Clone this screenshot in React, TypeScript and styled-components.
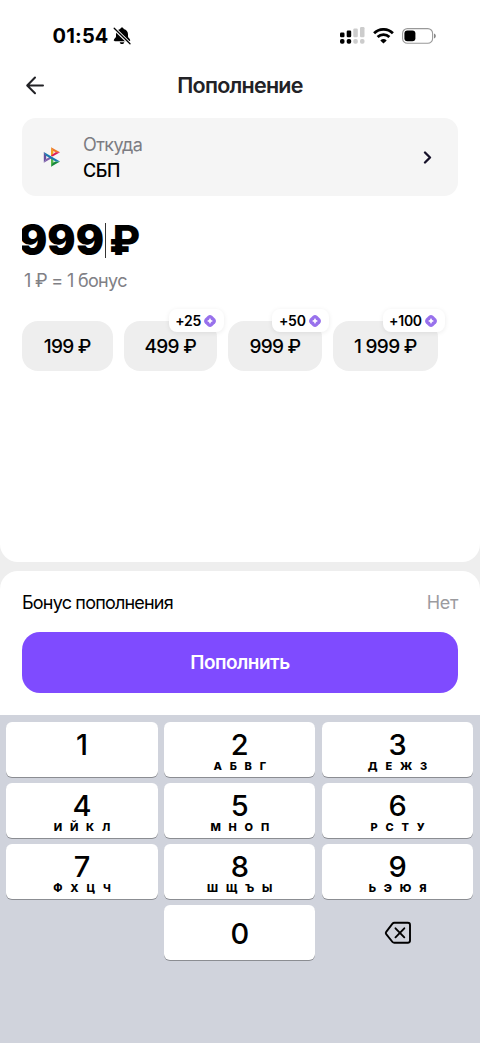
import React from 'react';
import styled, { createGlobalStyle } from 'styled-components';

const Global = createGlobalStyle`
  * { box-sizing: border-box; }
  body { margin: 0; background: #eeeeee; }
  button { border: 0; padding: 0; font: inherit; color: inherit; background: none; }
  svg { display: block; flex: none; }
`;

const Screen = styled.div`
  width: 480px;
  height: 1043px;
  overflow: hidden;
  display: flex;
  flex-direction: column;
  background: #eeeeee;
  color: #000;
  font-family: Inter, 'Liberation Sans', sans-serif;
`;

const TopSheet = styled.main`
  height: 562px;
  flex: none;
  background: #fff;
  border-radius: 0 0 18px 18px;
`;

const StatusBar = styled.div`
  height: 56px;
  padding: 15px 44px 0 52.5px;
  display: flex;
  align-items: center;
  justify-content: space-between;
`;

const StatusGroup = styled.div<{ $gap: number }>`
  display: flex;
  align-items: center;
  gap: ${p => p.$gap}px;
`;

const Clock = styled.span`
  font-size: 20px;
  line-height: 24px;
  font-weight: 700;
  letter-spacing: 0.2px;
`;

const Header = styled.header`
  height: 62px;
  padding: 0 22px 5px;
  display: grid;
  grid-template-columns: 26px 1fr 26px;
  align-items: center;
`;

const Title = styled.h1`
  margin: 0;
  text-align: center;
  font-size: 21.5px;
  line-height: 28px;
  font-weight: 600;
  letter-spacing: -0.75px;
  color: #222226;
`;

const SourceCard = styled.button`
  width: 436px;
  height: 78px;
  margin: 0 22px;
  padding: 0 25px 0 21px;
  display: flex;
  align-items: center;
  border-radius: 14px;
  background: #f5f5f5;
  text-align: left;
`;

const SourceText = styled.div`
  flex: 1;
  margin-left: 22px;
  padding-top: 2px;
  display: flex;
  flex-direction: column;
`;

const Caption = styled.span`
  font-size: 18px;
  line-height: 26px;
  letter-spacing: -0.6px;
  color: #7c7c82;
`;

const SourceName = styled.span`
  font-size: 18px;
  line-height: 26px;
  font-weight: 500;
  letter-spacing: -0.4px;
`;

const Amount = styled.div`
  height: 52px;
  margin: 18px 22px 0;
  display: flex;
  align-items: center;
  font-size: 42px;
  line-height: 52px;
  font-weight: 900;
`;

const AmountInput = styled.div`
  width: 82px;
  overflow: hidden;
  display: flex;
  justify-content: flex-end;
`;

const Caret = styled.i`
  width: 1.5px;
  height: 35px;
  margin: 0 3px 0 0.5px;
  background: #333;
`;

const Currency = styled.span`
  font-size: 41px;
  font-weight: 800;
`;

const Rate = styled.div`
  margin: 2px 24px 0;
  font-size: 18px;
  line-height: 26px;
  letter-spacing: -0.68px;
  color: #808085;
`;

const Presets = styled.div`
  margin: 27px 22px 0;
  display: flex;
  gap: 11.2px;
`;

const Preset = styled.button<{ $width: number }>`
  position: relative;
  width: ${p => p.$width}px;
  height: 50px;
  border-radius: 16px;
  background: #eeeeee;
  font-size: 19px;
  font-weight: 500;
  letter-spacing: -0.7px;
  text-align: center;
`;

const BonusBadge = styled.span`
  position: absolute;
  right: -7px;
  top: -12px;
  height: 23px;
  padding: 0 7.5px 0 6.5px;
  display: flex;
  align-items: center;
  gap: 3.5px;
  border-radius: 8px;
  background: #fff;
  box-shadow: 0 1px 5px rgba(0, 0, 0, 0.08);
  font-size: 14px;
  font-weight: 600;
  letter-spacing: -0.25px;
`;

const BottomSheet = styled.section`
  height: 144px;
  flex: none;
  margin-top: 9px;
  padding: 18px 22px 0;
  background: #fff;
  border-radius: 18px 18px 0 0;
`;

const BonusRow = styled.div`
  height: 26px;
  margin-bottom: 17px;
  display: flex;
  align-items: center;
  justify-content: space-between;
  font-size: 18px;
  letter-spacing: -0.8px;
`;

const Muted = styled.span`
  color: #9b9b9f;
  letter-spacing: -0.3px;
`;

const Submit = styled.button`
  width: 100%;
  height: 61px;
  border-radius: 18px;
  background: #7f4bff;
  color: #fff;
  font-size: 19px;
  font-weight: 600;
  letter-spacing: -0.5px;
`;

const Keyboard = styled.div`
  flex: 1;
  padding: 7px 6.4px 0;
  display: grid;
  grid-template-columns: repeat(3, 151.2px);
  grid-auto-rows: 55px;
  align-content: start;
  gap: 6px 6.600px;
  background: #d0d3dc;
`;

const Key = styled.button<{ $centered?: boolean }>`
  display: flex;
  flex-direction: column;
  align-items: center;
  justify-content: ${p => (p.$centered ? 'center' : 'flex-start')};
  padding-top: ${p => (p.$centered ? 1 : 6)}px;
  border-radius: 6px;
  background: #fff;
  box-shadow: 0 1px 0 #8b8d92;
`;

const Digit = styled.span`
  font-size: 29px;
  line-height: 33px;
  font-weight: 500;
`;

const Letters = styled.span`
  padding-left: 2.7px;
  font-size: 11px;
  line-height: 10px;
  font-weight: 800;
  letter-spacing: 2.7px;
  white-space: nowrap;
`;

const DeleteKey = styled.button`
  display: flex;
  align-items: center;
  justify-content: center;
`;

const MutedBell = () => (
  <svg width="18" height="18" viewBox="0 0 18 18">
    <path d="M9 .6c-.9 0-1.500.6-1.700 1.400C4.500 2.700 3 4.600 3 7.200v2.200c0 1.300-2.200 2.400-2.200 3.900 0 .6.500.9 1.100.9h14.200c.6 0 1.100-.3 1.100-.9 0-1.500-2.200-2.600-2.200-3.900V7.200c0-2.600-1.500-4.500-4.300-5.200C10.500 1.200 9.900.6 9 .6ZM6.700 15.200c.3 1.200 1.200 1.900 2.300 1.900s2-.7 2.300-1.900Z" />
    <path d="M1.300 1.500 16.700 16.700" stroke="#fff" strokeWidth="3.300" />
    <path d="M1.200 1.200 17 16.700" stroke="#000" strokeWidth="1.300" strokeLinecap="round" />
  </svg>
);

const BARS = [
  { x: 0, y: 5.5, h: 4.7, color: '#000' },
  { x: 6.7, y: 3.5, h: 6.7, color: '#000' },
  { x: 13.3, y: 1.5, h: 8.7, color: '#ccc' },
  { x: 20, y: 0, h: 10.2, color: '#ccc' },
];

const Signal = () => (
  <svg width="25" height="17" viewBox="0 0 25 17">
    {BARS.map(b => (
      <g key={b.x} fill={b.color}>
        <rect x={b.x} y={b.y} width="4.500" height={b.h} rx="1.200" />
        <rect x={b.x} y="12" width="4.500" height="4.700" rx="1.800" />
      </g>
    ))}
  </svg>
);

const Wifi = () => (
  <svg width="21" height="16" viewBox="0 0 21 16" fill="none" stroke="#000" strokeWidth="2.800">
    <path d="M1.100 5.200a13.500 13.500 0 0 1 18.800 0" />
    <path d="M4.600 9a8.400 8.400 0 0 1 11.800 0" />
    <path d="M10.500 15.500 7.300 12.400a4.700 4.700 0 0 1 6.400 0Z" fill="#000" stroke="none" />
  </svg>
);

const Battery = () => (
  <svg width="34" height="16" viewBox="0 0 34 16">
    <rect x=".6" y=".6" width="30" height="14.600" rx="4.800" fill="none" stroke="#999" strokeWidth="1.100" />
    <rect x="2.400" y="2.500" width="11" height="10.800" rx="3" />
    <path d="M32 5.500c1.300.5 1.800 1.300 1.800 2.400s-.5 2-1.800 2.500Z" fill="#888" />
  </svg>
);

const BackArrow = () => (
  <svg width="26" height="26" viewBox="0 0 26 26" fill="none" stroke="#222226" strokeWidth="2" strokeLinecap="round" strokeLinejoin="round">
    <path d="M21 13.500H5.300M13 5.500l-7.800 8 7.800 7.700" />
  </svg>
);

const SbpLogo = () => (
  <svg width="18" height="20" viewBox="0 0 18 20">
    <path d="M8.300.800v8.400L16.500 5.300Z" fill="#f6e5d6" />
    <path d="M8.300 10.700v8.500l8.200-4.500Z" fill="#d7eddb" />
    <path d="M8 .300v9.200l2.300-1.800V4.100Z" fill="#f3a021" />
    <path d="m8 .300 9 5h-4.300L9.900 3.800Z" fill="#ed762b" />
    <path d="M17 5.300 9.500 9.600 8 8.400l4.700-3.100Z" fill="#db1c58" />
    <path d="M8 10.500v9.300l2.300-3.900v-3.600Z" fill="#55b847" />
    <path d="m17 14.600-9 5.200 1.700-4.100 3.300-1.300Z" fill="#16893c" />
    <path d="M.800 5v10.800l2.400-3.700V8.500Z" fill="#66509e" />
    <path d="M.800 15.800 9.500 10.700 7.300 9.500l-4.100 2.600Z" fill="#805eaa" />
    <path d="m.800 5 16.200 9.600h-4.200L2.900 8.700Z" fill="#1879af" />
  </svg>
);

const Chevron = () => (
  <svg width="12" height="14" viewBox="0 0 12 14" fill="none" stroke="#161129" strokeWidth="2.300" strokeLinecap="round" strokeLinejoin="round">
    <path d="m4 2.500 5 5-5 5" />
  </svg>
);

const BonusCoin = () => (
  <svg width="12" height="12" viewBox="0 0 12 12">
    <path d="M3.700.9q2.300-1.700 4.600 0L11.100 3.700q1.700 2.300 0 4.600L8.300 11.100q-2.300 1.700-4.600 0L.9 8.300Q-.8 6 .9 3.700Z" fill="#9871ec" />
    <path d="M6 3.600Q6.500 5.500 8.400 6 6.500 6.500 6 8.400 5.500 6.500 3.600 6 5.500 5.500 6 3.600Z" fill="#fff" stroke="#fff" strokeWidth=".6" />
  </svg>
);

const Backspace = () => (
  <svg width="28" height="24" viewBox="0 0 28 24" fill="none" stroke="#000" strokeWidth="1.900" strokeLinecap="round" strokeLinejoin="round">
    <path d="M10.300 1.800h13.500c1.300 0 2.200.9 2.200 2.200v15.600c0 1.300-.9 2.200-2.200 2.200H10.300c-.8 0-1.300-.2-1.800-.8l-6.300-7.800c-.6-.8-.6-1.500 0-2.300l6.300-8.200c.5-.6 1-.9 1.800-.9Z" />
    <path d="m11.500 7.300 8.800 9M20.300 7.300l-8.800 9" />
  </svg>
);

const PRESETS = [
  { label: '199 ₽', width: 90.5 },
  { label: '499 ₽', width: 93.3, bonus: '+25' },
  { label: '999 ₽', width: 93.5, bonus: '+50' },
  { label: '1 999 ₽', width: 105, bonus: '+100' },
];

const KEYS = [
  ['1', ''], ['2', 'А Б В Г'], ['3', 'Д Е Ж З'],
  ['4', 'И Й К Л'], ['5', 'М Н О П'], ['6', 'Р С Т У'],
  ['7', 'Ф Х Ц Ч'], ['8', 'Ш Щ Ъ Ы'], ['9', 'Ь Э Ю Я'],
];

export default function App() {
  return (
    <Screen>
      <Global />
      <TopSheet>
        <StatusBar>
          <StatusGroup $gap={4}>
            <Clock>01:54</Clock>
            <MutedBell />
          </StatusGroup>
          <StatusGroup $gap={8}>
            <Signal />
            <Wifi />
            <Battery />
          </StatusGroup>
        </StatusBar>
        <Header>
          <button aria-label="Назад"><BackArrow /></button>
          <Title>Пополнение</Title>
        </Header>
        <SourceCard>
          <SbpLogo />
          <SourceText>
            <Caption>Откуда</Caption>
            <SourceName>СБП</SourceName>
          </SourceText>
          <Chevron />
        </SourceCard>
        <Amount>
          <AmountInput><span>999</span></AmountInput>
          <Caret />
          <Currency>₽</Currency>
        </Amount>
        <Rate>1 ₽ = 1 бонус</Rate>
        <Presets>
          {PRESETS.map(p => (
            <Preset key={p.label} $width={p.width}>
              {p.label}
              {p.bonus && <BonusBadge>{p.bonus}<BonusCoin /></BonusBadge>}
            </Preset>
          ))}
        </Presets>
      </TopSheet>
      <BottomSheet>
        <BonusRow>
          <span>Бонус пополнения</span>
          <Muted>Нет</Muted>
        </BonusRow>
        <Submit>Пополнить</Submit>
      </BottomSheet>
      <Keyboard>
        {KEYS.map(([digit, letters]) => (
          <Key key={digit}>
            <Digit>{digit}</Digit>
            <Letters>{letters}</Letters>
          </Key>
        ))}
        <span />
        <Key $centered><Digit>0</Digit></Key>
        <DeleteKey aria-label="Удалить"><Backspace /></DeleteKey>
      </Keyboard>
    </Screen>
  );
}
